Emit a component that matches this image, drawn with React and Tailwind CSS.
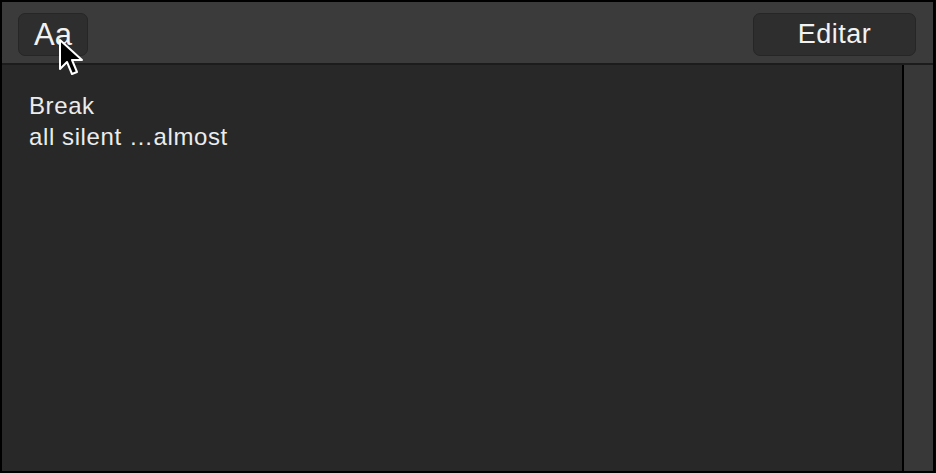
import React from 'react';

function Cursor() {
    return (
        <svg className="absolute left-[58px] top-[38px]" width="28" height="42" viewBox="0 0 28 42">
            <path
                d="M2 2 L2 31 L9 24 L14 36 L19 34 L14 22 L24 22 Z"
                fill="#000"
                stroke="#fff"
                strokeWidth="2"
                strokeLinejoin="round"
            />
        </svg>
    );
}

export default function App() {
    return (
        <div className="relative w-[936px] h-[473px] bg-black pl-[2px] pt-[2px] pr-[3px] pb-[2px] flex flex-col font-['Liberation_Sans',Arial,sans-serif]">
            {/* Header */}
            <div className="h-[63px] bg-[#3b3b3b] flex items-center justify-between pl-[16px] pr-[17px] pt-[3px] border-b-2 border-[#1c1c1c] shrink-0">
                <button className="w-[70px] h-[43px] rounded-[7px] bg-[#2e2e2e] border border-[#262626] text-[#f2f2f2] text-[31px] leading-none flex items-center justify-center">
                    Aa
                </button>
                <button className="w-[163px] h-[43px] rounded-[7px] bg-[#2e2e2e] border border-[#262626] text-[#f2f2f2] text-[27px] tracking-[0.5px] leading-none flex items-center justify-center">
                    Editar
                </button>
            </div>

            {/* Body */}
            <div className="flex flex-1 min-h-0">
                <div className="flex-1 bg-[#282828] pl-[27px] pt-[25px] text-[24px] leading-[31px] tracking-[0.6px] text-[#ececec]">
                    <div>Break</div>
                    <div>all silent …almost</div>
                </div>
                <div className="w-[2px] bg-black"></div>
                <div className="w-[29px] bg-[#383838]"></div>
            </div>

            <Cursor />
        </div>
    );
}
